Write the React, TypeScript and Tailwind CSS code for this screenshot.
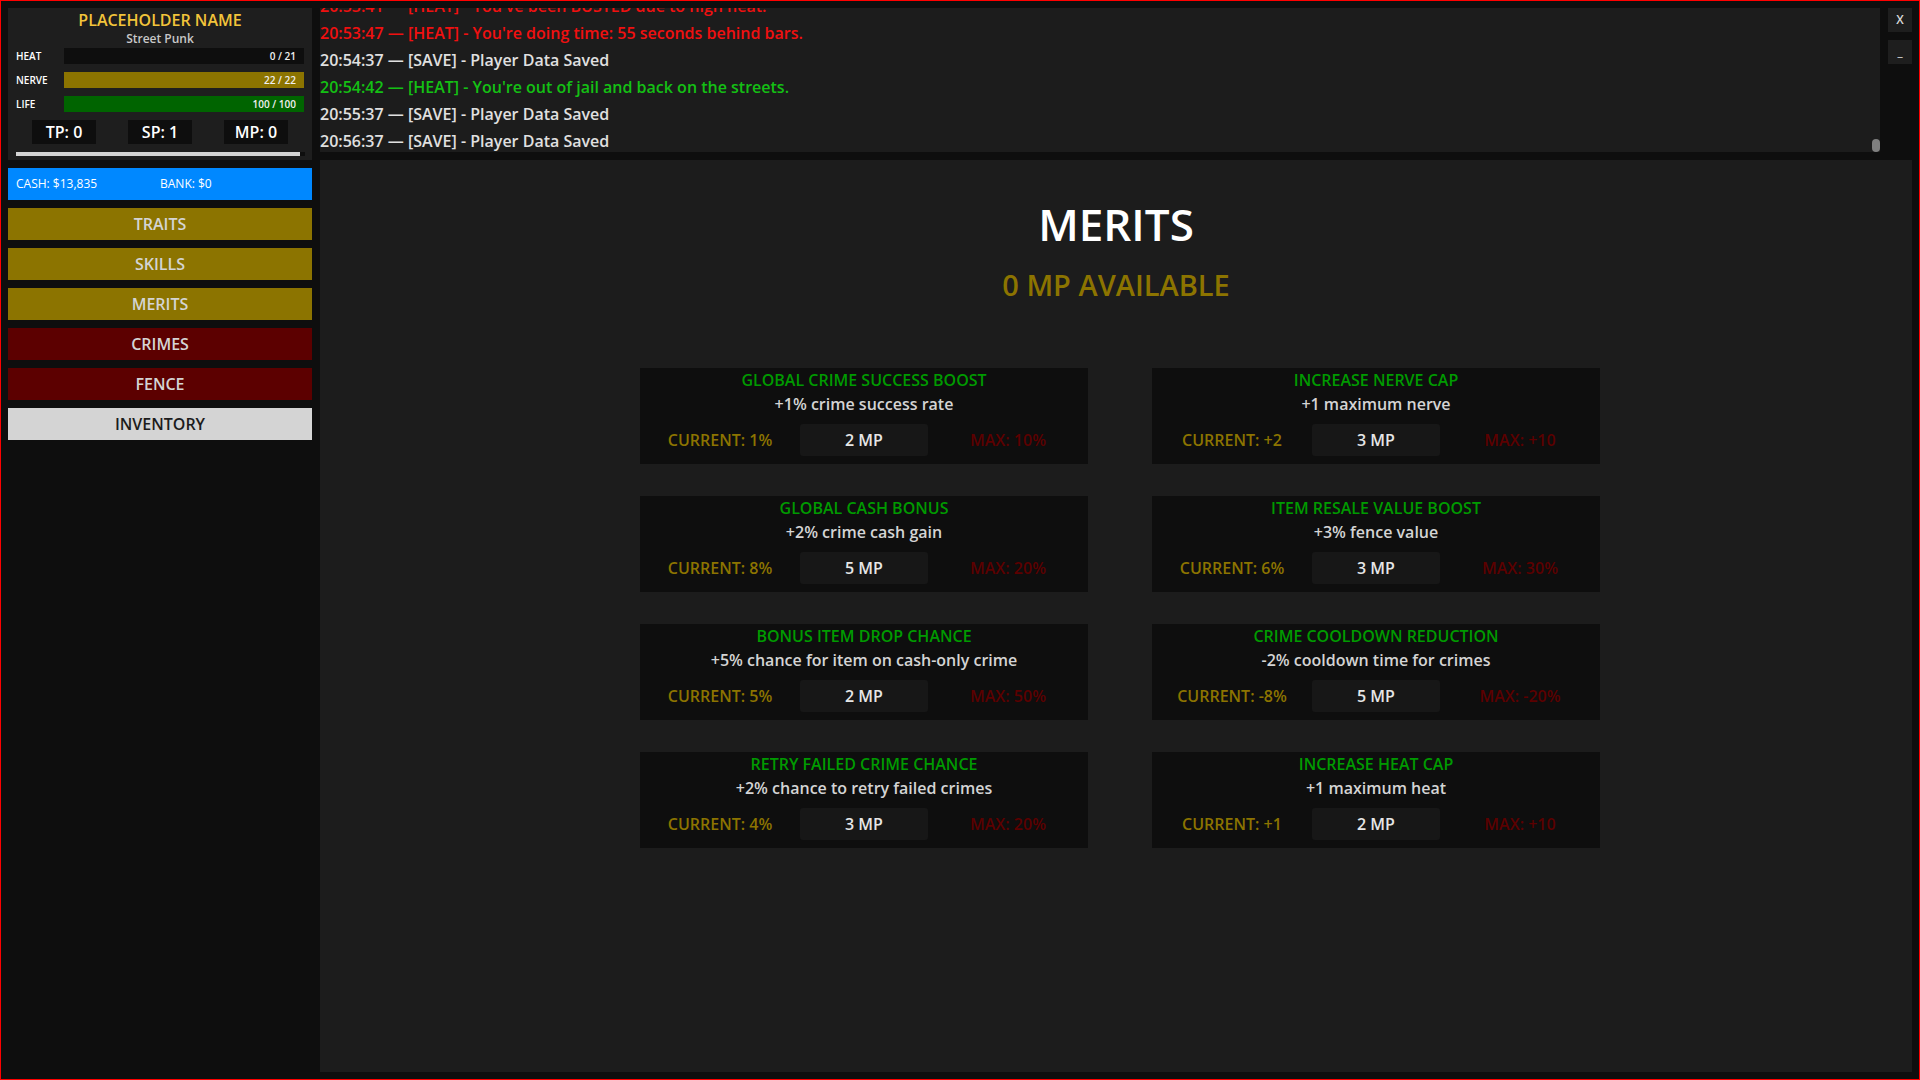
import React from 'react';

interface Merit {
    title: string;
    desc: string;
    current: string;
    cost: string;
    max: string;
}

const merits: Merit[] = [
    { title: 'GLOBAL CRIME SUCCESS BOOST', desc: '+1% crime success rate', current: '1%', cost: '2 MP', max: '10%' },
    { title: 'INCREASE NERVE CAP', desc: '+1 maximum nerve', current: '+2', cost: '3 MP', max: '+10' },
    { title: 'GLOBAL CASH BONUS', desc: '+2% crime cash gain', current: '8%', cost: '5 MP', max: '20%' },
    { title: 'ITEM RESALE VALUE BOOST', desc: '+3% fence value', current: '6%', cost: '3 MP', max: '30%' },
    { title: 'BONUS ITEM DROP CHANCE', desc: '+5% chance for item on cash-only crime', current: '5%', cost: '2 MP', max: '50%' },
    { title: 'CRIME COOLDOWN REDUCTION', desc: '-2% cooldown time for crimes', current: '-8%', cost: '5 MP', max: '-20%' },
    { title: 'RETRY FAILED CRIME CHANCE', desc: '+2% chance to retry failed crimes', current: '4%', cost: '3 MP', max: '20%' },
    { title: 'INCREASE HEAT CAP', desc: '+1 maximum heat', current: '+1', cost: '2 MP', max: '+10' },
];

const logLines: { text: string; color: string }[] = [
    { text: "20:53:41 — [HEAT] - You've been BUSTED due to high heat.", color: 'text-[#f01010]' },
    { text: "20:53:47 — [HEAT] - You're doing time: 55 seconds behind bars.", color: 'text-[#f01010]' },
    { text: '20:54:37 — [SAVE] - Player Data Saved', color: 'text-[#e0e0e0]' },
    { text: "20:54:42 — [HEAT] - You're out of jail and back on the streets.", color: 'text-[#14c014]' },
    { text: '20:55:37 — [SAVE] - Player Data Saved', color: 'text-[#e0e0e0]' },
    { text: '20:56:37 — [SAVE] - Player Data Saved', color: 'text-[#e0e0e0]' },
];

function StatBar({ label, value, fill }: { label: string; value: string; fill: string }) {
    return (
        <div className="flex items-center h-4">
            <span className="w-[56px] pl-2 text-[10px] text-white leading-none">{label}</span>
            <div className={`w-[240px] h-4 flex items-center justify-end pr-2 ${fill}`}>
                <span className="text-[10px] text-[#f0f0f0] leading-none">{value}</span>
            </div>
        </div>
    );
}

function NavButton({ label, bg, fg }: { label: string; bg: string; fg: string }) {
    return (
        <div className={`h-8 flex items-center justify-center text-[16px] ${bg} ${fg}`}>{label}</div>
    );
}

function MeritCard({ m }: { m: Merit }) {
    return (
        <div className="w-[448px] h-[96px] bg-[#0e0e0e] flex flex-col items-center">
            <div className="h-6 leading-[24px] text-[16px] text-[#009a00]">{m.title}</div>
            <div className="h-6 leading-[24px] text-[16px] text-[#d4d4d4]">{m.desc}</div>
            <div className="mt-2 w-full px-4 grid grid-cols-3 gap-4">
                <div className="h-8 flex items-center justify-center text-[16px] text-[#8c7400]">CURRENT: {m.current}</div>
                <div className="h-8 flex items-center justify-center text-[16px] text-[#e6e6e6] bg-[#171717] rounded-[3px]">{m.cost}</div>
                <div className="h-8 flex items-center justify-center text-[16px] text-[#5c0000]">MAX: {m.max}</div>
            </div>
        </div>
    );
}

export default function App() {
    return (
        <div className="w-[1920px] h-[1080px] overflow-hidden border border-[#ff0000] bg-[#0e0e0e] p-[7px] flex gap-2 font-['Open_Sans',sans-serif] font-semibold">
            {/* Sidebar */}
            <div className="w-[304px] shrink-0 flex flex-col gap-2">
                <div className="bg-[#1e1e1e] flex flex-col pb-1">
                    <div className="h-6 leading-[24px] text-center text-[16px] text-[#f2c43a]">PLACEHOLDER NAME</div>
                    <div className="h-3 leading-[14px] text-center text-[12px] text-[#c8c8c8]">Street Punk</div>
                    <div className="mt-1 flex flex-col gap-2">
                        <StatBar label="HEAT" value="0 / 21" fill="bg-[#0e0e0e]" />
                        <StatBar label="NERVE" value="22 / 22" fill="bg-[#8c7400]" />
                        <StatBar label="LIFE" value="100 / 100" fill="bg-[#006400]" />
                    </div>
                    <div className="mt-2 pl-6 flex gap-8">
                        {['TP: 0', 'SP: 1', 'MP: 0'].map(t => (
                            <div key={t} className="w-16 h-6 bg-[#0e0e0e] flex items-center justify-center text-[16px] text-white">{t}</div>
                        ))}
                    </div>
                    <div className="mt-2 ml-2 w-[289px] h-1 bg-[#0e0e0e] flex">
                        <div className="w-[284px] h-1 bg-[#d4d4d4]" />
                    </div>
                </div>

                <div className="h-8 bg-[#0088ff] flex items-center pl-2 text-[12px] font-normal text-white">
                    <span className="w-[144px]">CASH: $13,835</span>
                    <span>BANK: $0</span>
                </div>

                <NavButton label="TRAITS" bg="bg-[#8c7400]" fg="text-[#d4d4d4]" />
                <NavButton label="SKILLS" bg="bg-[#8c7400]" fg="text-[#d4d4d4]" />
                <NavButton label="MERITS" bg="bg-[#8c7400]" fg="text-[#d4d4d4]" />
                <NavButton label="CRIMES" bg="bg-[#5c0000]" fg="text-[#d4d4d4]" />
                <NavButton label="FENCE" bg="bg-[#5c0000]" fg="text-[#d4d4d4]" />
                <NavButton label="INVENTORY" bg="bg-[#d4d4d4]" fg="text-[#1c1c1c]" />
            </div>

            {/* Right side */}
            <div className="flex-1 flex flex-col gap-2">
                <div className="h-[144px] shrink-0 flex gap-2">
                    <div className="flex-1 relative bg-[#1c1c1c] overflow-hidden">
                        <div className="-mt-[15px] flex flex-col">
                            {logLines.map((l, i) => (
                                <div key={i} className={`h-[27px] leading-[27px] text-[16px] whitespace-nowrap ${l.color}`}>{l.text}</div>
                            ))}
                        </div>
                        <div className="absolute right-0 top-[131px] w-2 h-[13px] rounded-full bg-[#808080]" />
                    </div>
                    <div className="w-6 flex flex-col gap-2">
                        <div className="h-6 bg-[#1e1e1e] flex items-center justify-center text-[12px] text-[#d8d8d8]">X</div>
                        <div className="h-6 bg-[#1e1e1e] flex items-center justify-center text-[12px] text-[#d8d8d8]">_</div>
                    </div>
                </div>

                <div className="flex-1 bg-[#1c1c1c] flex flex-col items-center">
                    <div className="mt-[42px] text-[44px] leading-none text-white">MERITS</div>
                    <div className="mt-[24px] text-[29px] leading-none text-[#8c7400]">0 MP AVAILABLE</div>
                    <div className="mt-[69px] pl-2 w-full flex justify-center">
                        <div className="grid grid-cols-2 gap-x-16 gap-y-8">
                            {merits.map(m => (
                                <MeritCard key={m.title} m={m} />
                            ))}
                        </div>
                    </div>
                </div>
            </div>
        </div>
    );
}
